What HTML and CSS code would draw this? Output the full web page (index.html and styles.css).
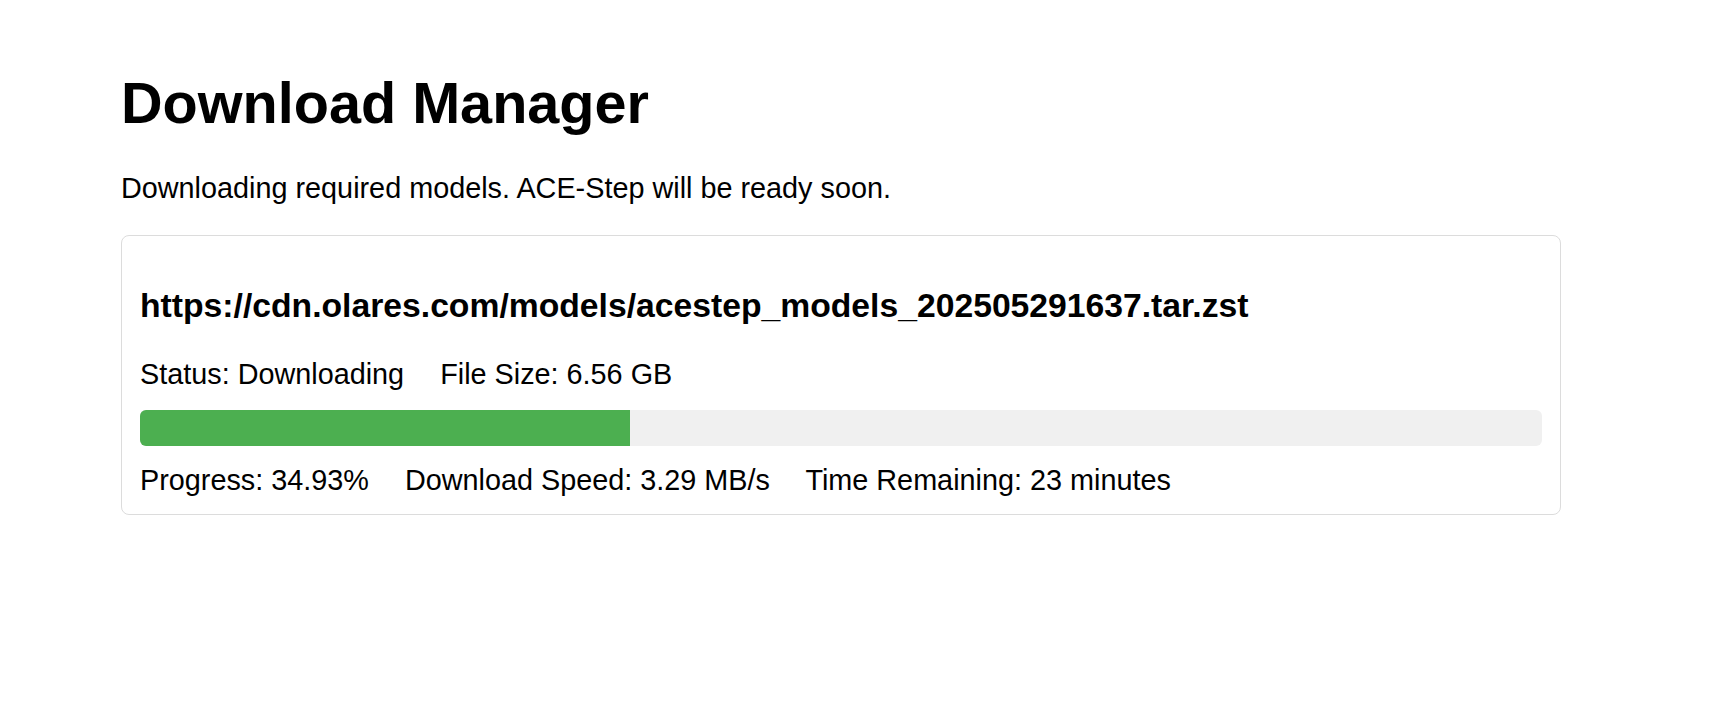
FILE: index.html
```html
<!DOCTYPE html>
<html lang="en">
  <head>
    <meta charset="utf-8">
    <title>Download Manager</title>
    <link rel="stylesheet" href="styles.css">
  </head>
  <body>
    <main class="page">
      <h1>Download Manager</h1>
      <p class="intro">Downloading required models. ACE-Step will be ready soon.</p>
      <!-- one card per file being fetched -->
      <div class="download-item">
        <h3 class="file-url">https://cdn.olares.com/models/acestep_models_202505291637.tar.zst</h3>
        <p class="info-row">
          <span class="info">Status: Downloading</span>
          <span class="info">File Size: 6.56 GB</span>
        </p>
        <div class="progress-bar">
          <div class="progress" style="width: 34.93%"></div>
        </div>
        <p class="info-row stats">
          <span class="info">Progress: 34.93%</span>
          <span class="info">Download Speed: 3.29 MB/s</span>
          <span class="info">Time Remaining: 23 minutes</span>
        </p>
      </div>
    </main>
  </body>
</html>
```
FILE: styles.css
```css
body {
  margin: 0;
  font-family: "Liberation Sans", Arial, Helvetica, sans-serif;
  color: #000;
  background-color: #fff;
}

.page {
  width: 1440px;
  padding: 31px 0 0 121px;
}

h1 {
  font-size: 57.6px;
  font-weight: bold;
  margin: 38.6px 0 38px;
}

.intro {
  font-size: 28.8px;
  line-height: 29.4px;
  margin: 0 0 32px;
}

.download-item {
  border: 1px solid #dcdcdc;
  border-radius: 8px;
  padding: 18px;
}

.file-url {
  font-size: 33.7px;
  line-height: 34.5px;
  font-weight: bold;
  margin: 33.7px 0 38.3px;
}

.info-row {
  font-size: 28.8px;
  line-height: 29.4px;
  margin: 0 0 20px;
}

.info {
  margin-right: 28px;
}

.stats {
  margin: 20.5px 0 0;
}

.progress-bar {
  height: 36px;
  background-color: #f0f0f0;
  border-radius: 6px;
  overflow: hidden;
}

.progress {
  height: 100%;
  background-color: #4caf50;
}
```
